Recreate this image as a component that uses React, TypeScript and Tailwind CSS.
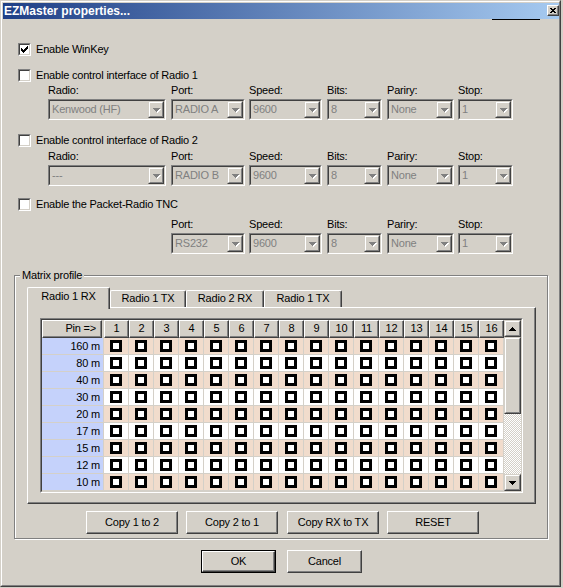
import React from "react";

const BANDS = ["160 m", "80 m", "40 m", "30 m", "20 m", "17 m", "15 m", "12 m", "10 m"];
const COLS = Array.from({ length: 16 }, (_, i) => i + 1);

type Row = [number, number, number];

function Arrow({ color = "#000", shadow = false, up = false }: { color?: string; shadow?: boolean; up?: boolean }) {
  const rows: Row[] = up
    ? [[3, 0, 1], [2, 1, 3], [1, 2, 5], [0, 3, 7]]
    : [[0, 0, 7], [1, 1, 5], [2, 2, 3], [3, 3, 1]];
  return (
    <svg width={shadow ? 8 : 7} height={shadow ? 5 : 4} viewBox={shadow ? "0 0 8 5" : "0 0 7 4"} shapeRendering="crispEdges">
      {shadow && rows.map(([x, y, w], i) => <rect key={"s" + i} x={x + 1} y={y + 1} width={w} height={1} fill="#ffffff" />)}
      {rows.map(([x, y, w], i) => <rect key={i} x={x} y={y} width={w} height={1} fill={color} />)}
    </svg>
  );
}

function CheckMark() {
  const rows: Row[] = [[6, 0, 1], [5, 1, 2], [0, 2, 1], [4, 2, 3], [0, 3, 2], [3, 3, 3], [0, 4, 5], [1, 5, 3], [2, 6, 1]];
  return (
    <svg width={7} height={7} viewBox="0 0 7 7" shapeRendering="crispEdges" className="ml-[1px] mt-[1px]">
      {rows.map(([x, y, w], i) => <rect key={i} x={x} y={y} width={w} height={1} fill="#000" />)}
    </svg>
  );
}

function CheckBox({ checked = false }: { checked?: boolean }) {
  return (
    <div className="w-[13px] h-[13px] shrink-0 border border-t-[#808080] border-l-[#808080] border-r-white border-b-white">
      <div className="h-full border border-t-[#404040] border-l-[#404040] border-r-[#d4d0c8] border-b-[#d4d0c8] bg-white">
        {checked && <CheckMark />}
      </div>
    </div>
  );
}

function CheckRow({ label, checked = false, className }: { label: string; checked?: boolean; className: string }) {
  return (
    <div className={`flex items-center gap-[5px] ml-[15px] h-[13px] ${className}`}>
      <CheckBox checked={checked} />
      <span className="leading-[13px] whitespace-nowrap">{label}</span>
    </div>
  );
}

function Combo({ w, text }: { w: string; text: string }) {
  return (
    <div className={`${w} h-[21px] border border-t-[#808080] border-l-[#808080] border-r-white border-b-white`}>
      <div className="h-full flex border border-t-[#404040] border-l-[#404040] border-r-[#d4d0c8] border-b-[#d4d0c8] bg-[#d4d0c8]">
        <div className="flex-1 pl-[2px] leading-[17px] text-[#808080] whitespace-nowrap overflow-hidden">{text}</div>
        <div className="w-[16px] h-full border border-t-[#d4d0c8] border-l-[#d4d0c8] border-r-[#404040] border-b-[#404040]">
          <div className="h-full flex items-center justify-center border border-t-white border-l-white border-r-[#808080] border-b-[#808080] pl-[1px] pt-[1px]">
            <Arrow color="#808080" shadow />
          </div>
        </div>
      </div>
    </div>
  );
}

const FIELDS = [
  { label: "Radio:", wrap: "w-[123px]", w: "w-[118px]" },
  { label: "Port:", wrap: "w-[78px]", w: "w-[74px]" },
  { label: "Speed:", wrap: "w-[78px]", w: "w-[73px]" },
  { label: "Bits:", wrap: "w-[60px]", w: "w-[55px]" },
  { label: "Pariry:", wrap: "w-[71px]", w: "w-[67px]" },
  { label: "Stop:", wrap: "w-[55px]", w: "w-[55px]" },
];

function FieldRow({ values, className, skipFirst = false }: { values: string[]; className: string; skipFirst?: boolean }) {
  const fields = skipFirst ? FIELDS.slice(1) : FIELDS;
  return (
    <div className={`flex ${skipFirst ? "ml-[168px]" : "ml-[45px]"} ${className}`}>
      {fields.map((f, i) => (
        <div key={f.label} className={`${f.wrap} flex flex-col gap-[2px]`}>
          <div className="h-[13px] leading-[13px]">{f.label}</div>
          <Combo w={f.w} text={values[i]} />
        </div>
      ))}
    </div>
  );
}

function Box() {
  return <div className="w-[12px] h-[12px] border-[3px] border-black bg-white" />;
}

function Grid() {
  return (
    <div className="w-[483px] h-[175px] border border-t-[#808080] border-l-[#808080] border-r-white border-b-white">
      <div className="h-full flex border border-t-[#404040] border-l-[#404040] border-r-[#d4d0c8] border-b-[#d4d0c8] bg-white">
        <div className="w-[462px] flex flex-col">
          <div className="h-[18px] flex bg-[#d4d0c8]">
            <div className="w-[60px] h-full border border-t-white border-l-white border-r-[#404040] border-b-[#404040] shadow-[inset_-1px_-1px_0_#808080] text-right pr-[5px] leading-[15px]">
              Pin =&gt;
            </div>
            <div className="w-[2px]" />
            {COLS.map((c) => (
              <div key={c} className="w-[25px] h-full border border-t-white border-l-white border-r-[#404040] border-b-[#404040] shadow-[inset_-1px_-1px_0_#808080] text-center leading-[15px]">
                {c}
              </div>
            ))}
          </div>
          {BANDS.map((b, r) => (
            <div key={b} className="h-[17px] flex">
              <div className="w-[62px] h-full bg-[#c5d2fb] border-r border-b border-[#d4d0c8] text-right pr-[3px] leading-[16px]">{b}</div>
              {COLS.map((c) => (
                <div
                  key={c}
                  className={`w-[25px] h-full border-r border-b border-[#d4d0c8] flex items-center justify-center ${r % 2 === 0 ? "bg-[#f1dccc]" : "bg-white"}`}
                >
                  <Box />
                </div>
              ))}
            </div>
          ))}
        </div>
        <div className="w-[17px] flex flex-col">
          <div className="h-[17px] border border-t-[#d4d0c8] border-l-[#d4d0c8] border-r-[#404040] border-b-[#404040] bg-[#d4d0c8]">
            <div className="h-full flex items-center justify-center border border-t-white border-l-white border-r-[#808080] border-b-[#808080]">
              <Arrow up />
            </div>
          </div>
          <div className="h-[77px] border border-t-[#d4d0c8] border-l-[#d4d0c8] border-r-[#404040] border-b-[#404040] bg-[#d4d0c8]">
            <div className="h-full border border-t-white border-l-white border-r-[#808080] border-b-[#808080]" />
          </div>
          <div className="flex-1 bg-[repeating-conic-gradient(#d4d0c8_0%_25%,#ffffff_0%_50%)] bg-[length:2px_2px]" />
          <div className="h-[17px] border border-t-[#d4d0c8] border-l-[#d4d0c8] border-r-[#404040] border-b-[#404040] bg-[#d4d0c8]">
            <div className="h-full flex items-center justify-center border border-t-white border-l-white border-r-[#808080] border-b-[#808080] pt-[1px]">
              <Arrow />
            </div>
          </div>
        </div>
      </div>
    </div>
  );
}

function PushButton({ w, children, className = "" }: { w: string; children: React.ReactNode; className?: string }) {
  return (
    <div
      className={`${w} h-[23px] border border-t-white border-l-white border-r-[#404040] border-b-[#404040] shadow-[inset_-1px_-1px_0_#808080] flex items-center justify-center pb-[1px] ${className}`}
    >
      {children}
    </div>
  );
}

export default function App() {
  return (
    <div className="w-[563px] h-[588px] bg-[#d4d0c8] font-['Liberation_Sans',Arial,sans-serif] text-[11px] tracking-[-0.2px] text-black select-none">
      <div className="w-[561px] h-[587px] border border-t-[#d4d0c8] border-l-[#d4d0c8] border-r-[#404040] border-b-[#404040]">
        <div className="h-full border border-t-white border-l-white border-r-[#808080] border-b-[#808080] pl-[1px] pt-[1px] bg-[#d4d0c8]">
          <div className="h-[16px] flex items-start justify-between bg-[linear-gradient(to_right,#1f3f86,#a6caf0)]">
            <span className="pl-[1px] text-white font-bold text-[12px] tracking-normal leading-[16px] whitespace-nowrap">EZMaster properties...</span>
            <div className="mt-[2px] w-[12px] h-[11px] border border-t-white border-l-white border-r-[#404040] border-b-[#404040] shadow-[inset_-1px_-1px_0_#808080] bg-[#d4d0c8] flex items-center justify-center">
              <svg width={6} height={5} viewBox="0 0 6 5" shapeRendering="crispEdges">
                <rect x={0} y={0} width={2} height={1} fill="#000" />
                <rect x={4} y={0} width={2} height={1} fill="#000" />
                <rect x={1} y={1} width={4} height={1} fill="#000" />
                <rect x={2} y={2} width={2} height={1} fill="#000" />
                <rect x={1} y={3} width={4} height={1} fill="#000" />
                <rect x={0} y={4} width={2} height={1} fill="#000" />
                <rect x={4} y={4} width={2} height={1} fill="#000" />
              </svg>
            </div>
          </div>
          <div className="h-[1px] w-[48px] ml-[489px] bg-black" />

          <CheckRow label="Enable WinKey" checked className="mt-[23px]" />

          <CheckRow label="Enable control interface of Radio 1" className="mt-[13px]" />
          <FieldRow values={["Kenwood (HF)", "RADIO A", "9600", "8", "None", "1"]} className="mt-[2px]" />

          <CheckRow label="Enable control interface of Radio 2" className="mt-[14px]" />
          <FieldRow values={["---", "RADIO B", "9600", "8", "None", "1"]} className="mt-[3px]" />

          <CheckRow label="Enable the Packet-Radio TNC" className="mt-[12px]" />
          <FieldRow values={["RS232", "9600", "8", "None", "1"]} className="mt-[7px]" skipFirst />

          <div className="relative mt-[21px] ml-[11px] w-[534px] h-[264px] border border-[#808080] shadow-[inset_1px_1px_0_#ffffff,1px_1px_0_#ffffff]">
            <span className="absolute left-[5px] -top-[7px] px-[2px] bg-[#d4d0c8] leading-[13px]">Matrix profile</span>

            <div className="relative z-10 flex items-end ml-[12px] mt-[11px] h-[20px]">
              <div className="w-[83px] h-[22px] -mb-[2px] bg-[#d4d0c8] border-l border-t border-r border-l-white border-t-white border-r-[#404040] shadow-[inset_-1px_0_0_#808080] rounded-t-[2px] text-center pt-[2px] leading-[13px]">
                Radio 1 RX
              </div>
              <div className="w-[76px] h-[17px] bg-[#d4d0c8] border-l border-t border-r border-l-white border-t-white border-r-[#404040] shadow-[inset_-1px_0_0_#808080] rounded-t-[2px] text-center pt-[1px] leading-[13px]">
                Radio 1 TX
              </div>
              <div className="w-[78px] h-[17px] bg-[#d4d0c8] border-l border-t border-r border-l-white border-t-white border-r-[#404040] shadow-[inset_-1px_0_0_#808080] rounded-t-[2px] text-center pt-[1px] leading-[13px]">
                Radio 2 RX
              </div>
              <div className="w-[78px] h-[17px] bg-[#d4d0c8] border-l border-t border-r border-l-white border-t-white border-r-[#404040] shadow-[inset_-1px_0_0_#808080] rounded-t-[2px] text-center pt-[1px] leading-[13px]">
                Radio 1 TX
              </div>
            </div>

            <div className="ml-[12px] w-[509px] h-[197px] border border-t-white border-l-white border-r-[#404040] border-b-[#404040] shadow-[inset_-1px_-1px_0_#808080] pt-[10px] pl-[12px]">
              <Grid />
            </div>

            <div className="flex mt-[7px] ml-[71px]">
              <PushButton w="w-[92px]">Copy 1 to 2</PushButton>
              <PushButton w="w-[92px]" className="ml-[8px]">Copy 2 to 1</PushButton>
              <PushButton w="w-[92px]" className="ml-[9px]">Copy RX to TX</PushButton>
              <PushButton w="w-[92px]" className="ml-[8px]">RESET</PushButton>
            </div>
          </div>

          <div className="flex mt-[11px] ml-[198px]">
            <div className="w-[75px] h-[23px] border border-black">
              <div className="h-full border border-t-white border-l-white border-r-[#404040] border-b-[#404040] shadow-[inset_-1px_-1px_0_#808080] flex items-center justify-center pb-[1px]">
                OK
              </div>
            </div>
            <PushButton w="w-[75px]" className="ml-[11px]">Cancel</PushButton>
          </div>
        </div>
      </div>
    </div>
  );
}
